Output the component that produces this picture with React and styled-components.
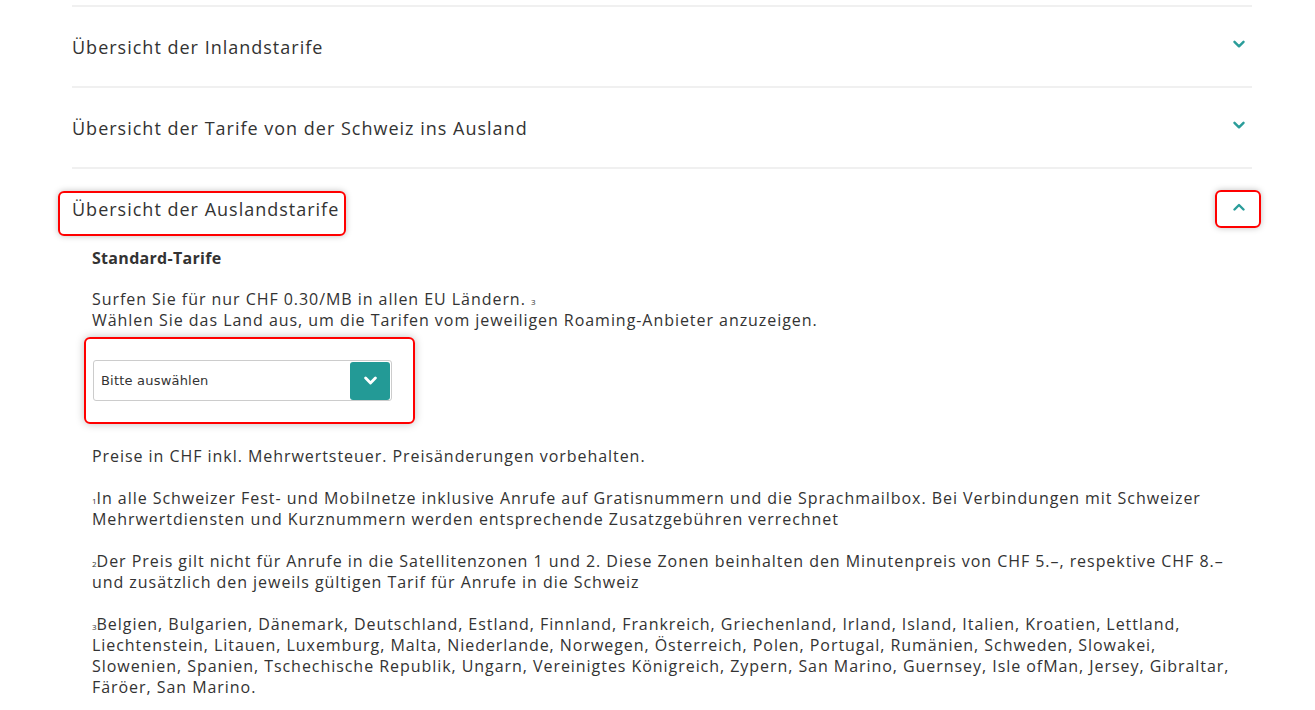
import React, { useState } from 'react'
import styled, { createGlobalStyle } from 'styled-components'

const GlobalStyle = createGlobalStyle`
    html, body { margin: 0; padding: 0; background: #fff; }
    body { font-family: "Open Sans", "Noto Sans", sans-serif; color: #333; }
`

const Chevron = ({ up, color = '#2a9d9a', size = 12, width = 2.4 }) => (
    <svg width={size} height={size} viewBox="0 0 12 12" fill="none">
        <path d={up ? 'M1.5 8.5 L6 4 L10.5 8.5' : 'M1.5 3.8 L6 8.3 L10.5 3.8'} stroke={color} strokeWidth={width} strokeLinecap="round" strokeLinejoin="round" />
    </svg>
)

const items = [
    { title: 'Übersicht der Inlandstarife' },
    { title: 'Übersicht der Tarife von der Schweiz ins Ausland' },
    { title: 'Übersicht der Auslandstarife' },
]

const App = () => {
    const [open, setOpen] = useState(2)
    return (
        <Page>
            <GlobalStyle />
            <Accordion>
                {items.map((it, i) => (
                    <Item key={i}>
                        <Header onClick={() => setOpen(open === i ? -1 : i)}>
                            <Title marked={i === 2}>{it.title}</Title>
                            <Toggle marked={i === 2}>
                                <Chevron up={open === i} />
                            </Toggle>
                        </Header>
                        {open === i && i === 2 && <Content />}
                    </Item>
                ))}
            </Accordion>
        </Page>
    )
}

const Content = () => (
    <Body>
        <h4>Standard-Tarife</h4>
        <p>
            Surfen Sie für nur CHF 0.30/MB in allen EU Ländern. <Note>3</Note><br />
            Wählen Sie das Land aus, um die Tarifen vom jeweiligen Roaming-Anbieter anzuzeigen.
        </p>
        <SelectMark>
            <Select>
                <span>Bitte auswählen</span>
                <SelectBtn><Chevron color="#fff" size={13} width={2.6} /></SelectBtn>
            </Select>
        </SelectMark>
        <p>Preise in CHF inkl. Mehrwertsteuer. Preisänderungen vorbehalten.</p>
        <p>
            <Note>1</Note>In alle Schweizer Fest- und Mobilnetze inklusive Anrufe auf Gratisnummern und die Sprachmailbox. Bei Verbindungen mit Schweizer<br />
            Mehrwertdiensten und Kurznummern werden entsprechende Zusatzgebühren verrechnet
        </p>
        <p>
            <Note>2</Note>Der Preis gilt nicht für Anrufe in die Satellitenzonen 1 und 2. Diese Zonen beinhalten den Minutenpreis von CHF 5.–, respektive CHF 8.–<br />
            und zusätzlich den jeweils gültigen Tarif für Anrufe in die Schweiz
        </p>
        <p>
            <Note>3</Note>Belgien, Bulgarien, Dänemark, Deutschland, Estland, Finnland, Frankreich, Griechenland, Irland, Island, Italien, Kroatien, Lettland,<br />
            Liechtenstein, Litauen, Luxemburg, Malta, Niederlande, Norwegen, Österreich, Polen, Portugal, Rumänien, Schweden, Slowakei,<br />
            Slowenien, Spanien, Tschechische Republik, Ungarn, Vereinigtes Königreich, Zypern, San Marino, Guernsey, Isle ofMan, Jersey, Gibraltar,<br />
            Färöer, San Marino.
        </p>
    </Body>
)

const Page = styled.div`
    padding: 5px 63px 0 72px;
    height: 710px; overflow: hidden; box-sizing: border-box;
`
const Accordion = styled.div`
    border-top: 2px solid #f0f0f0;
`
const Item = styled.div`
    border-bottom: 2px solid #f0f0f0;
    &:last-child { border-bottom: none; }
`
const Header = styled.div`
    display: flex; align-items: center; justify-content: space-between;
    height: 79px; cursor: pointer;
`
const Title = styled.div`
    font-size: 18px; line-height: 24px; letter-spacing: 1px; color: #333;
    position: relative;
    ${p => p.marked && `
        &:after {content: ""; position: absolute; left: -14px; right: -7px; top: -6px; bottom: -15px;
            border: 2px solid #f00; border-radius: 6px; box-shadow: 0 0 6px rgba(0,0,0,0.25);}
    `}
`
const Toggle = styled.div`
    width: 18px; margin-right: 4px; display: flex; justify-content: center; position: relative;
    margin-top: ${p => p.marked ? '-4px' : '-6px'};
    ${p => p.marked && `
        &:after {content: ""; position: absolute; left: -15px; right: -13px; top: -11px; bottom: -15px;
            border: 2px solid #f00; border-radius: 6px; box-shadow: 0 0 6px rgba(0,0,0,0.25);}
    `}
`
const Body = styled.div`
    padding: 0 20px; font-size: 16px; line-height: 21px; letter-spacing: 0.95px; color: #333;
    h4 {font-size: 16px; font-weight: 700; margin: 0 0 20px; line-height: 21px; letter-spacing: 0.3px;}
    p {margin: 0 0 21px; white-space: nowrap;}
`
const Note = styled.span`
    font-size: 8px; line-height: 0; letter-spacing: 0;
`
const SelectMark = styled.div`
    width: 299px; padding: 21px 21px 21px 7px; margin: -15px 0 22px -8px; position: relative;
    border: 2px solid #f00; border-radius: 6px; box-shadow: 0 0 8px rgba(0,0,0,0.25);
`
const Select = styled.div`
    height: 41px; box-sizing: border-box; border: 1px solid #ccc; border-radius: 3px;
    display: flex; align-items: center; justify-content: space-between; padding: 0 1px 0 7px;
    span {font-family: "DejaVu Sans", "Liberation Sans", sans-serif; font-size: 13px; letter-spacing: 0.2px; color: #333;}
`
const SelectBtn = styled.div`
    width: 40px; height: 38px; border-radius: 3px; background: #239a96;
    display: flex; align-items: center; justify-content: center;
`

export default App
